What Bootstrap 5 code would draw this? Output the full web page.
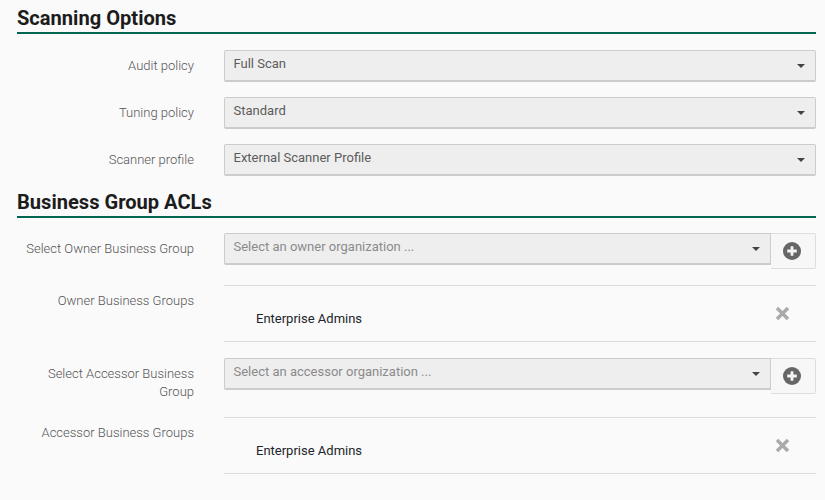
<!DOCTYPE html>
<html lang="en">
<head>
<meta charset="utf-8">
<title>Scanning Options</title>
<link href="https://cdn.jsdelivr.net/npm/bootstrap@5.3.0/dist/css/bootstrap.min.css" rel="stylesheet">
<style>
html,body{height:100%}
body{background:#fafafa;font-family:Roboto,"Liberation Sans",sans-serif;font-size:13px;color:#212529;overflow:hidden}
.page-wrap{padding:6px 9px 0 17px}
.sect-title{font-family:Roboto,"Liberation Sans",sans-serif;font-weight:700;font-size:20.1px;line-height:24px;margin:0;padding-bottom:2px;border-bottom:2px solid #00664f;color:#1c1c1c}
.sect-two{margin-top:14px}
.form-line{display:flex}
.lbl{width:177px;flex:none;text-align:right;color:#555;line-height:18px;font-weight:300}
.fld{margin-left:30px;flex:1;min-width:0}
.pick{height:32px;background:#eee;border:1px solid #ccc;border-bottom-width:2px;border-radius:2px;padding:4px 10px 4px 8.5px;line-height:18px;color:#5c5c5c;display:flex;justify-content:space-between}
.pick.ghost{color:#8b8b8b;flex:1;border-radius:2px 0 0 2px}
.caret-mark{width:0;height:0;border-left:4.5px solid transparent;border-right:4.5px solid transparent;border-top:4.5px solid #444;margin:8.5px 0 0}
.scan-line{margin-top:15px}
.scan-line:first-of-type{margin-top:16px}
.scan-line .lbl{padding-top:7px}
.add-box{width:45px;height:36px;flex:none;border:1px solid #ddd;border-left:0;border-radius:0 2px 2px 0;background:#f7f7f7;display:flex;align-items:center;justify-content:center}
.add-box svg{margin:0 2px 1px 0}
.list-line{border-top:1px solid #ddd;border-bottom:1px solid #ddd;height:57px;display:flex;align-items:center;justify-content:space-between;padding:11px 26px 0 32px;color:#212529}
.list-line svg{margin-top:-11px}
.own-row{margin-top:16px}
.own-row .lbl{padding-top:7px}
.acc-sel{margin-top:16px}
.acc-sel .lbl{padding-top:7px}
.acc-list{margin-top:16px}
.acc-list .lbl{padding-top:7px}
</style>
</head>
<body>
<div class="page-wrap">
  <h2 class="sect-title">Scanning Options</h2>
  <div class="form-line scan-line"><div class="lbl">Audit policy</div><div class="fld"><div class="pick"><span>Full Scan</span><i class="caret-mark"></i></div></div></div>
  <div class="form-line scan-line"><div class="lbl">Tuning policy</div><div class="fld"><div class="pick"><span>Standard</span><i class="caret-mark"></i></div></div></div>
  <div class="form-line scan-line"><div class="lbl">Scanner profile</div><div class="fld"><div class="pick"><span>External Scanner Profile</span><i class="caret-mark"></i></div></div></div>

  <h2 class="sect-title sect-two">Business Group ACLs</h2>

  <div class="form-line scan-line"><div class="lbl">Select Owner Business Group</div><div class="fld d-flex align-items-start"><div class="pick ghost"><span>Select an owner organization ...</span><i class="caret-mark"></i></div><div class="add-box"><svg width="18" height="18" viewBox="0 0 18 18"><circle cx="9" cy="9" r="9" fill="#666"/><path d="M9 4.2v9.6M4.2 9h9.6" stroke="#f4f4f4" stroke-width="2.8"/></svg></div></div></div>
  <div class="form-line own-row"><div class="lbl">Owner Business Groups</div><div class="fld"><div class="list-line"><span>Enterprise Admins</span><svg width="15" height="15" viewBox="0 0 15 15"><path d="M2 2l11 11M13 2L2 13" stroke="#aaa" stroke-width="3.4"/></svg></div></div></div>

  <div class="form-line acc-sel"><div class="lbl">Select Accessor Business Group</div><div class="fld d-flex align-items-start"><div class="pick ghost"><span>Select an accessor organization ...</span><i class="caret-mark"></i></div><div class="add-box"><svg width="18" height="18" viewBox="0 0 18 18"><circle cx="9" cy="9" r="9" fill="#666"/><path d="M9 4.2v9.6M4.2 9h9.6" stroke="#f4f4f4" stroke-width="2.8"/></svg></div></div></div>
  <div class="form-line acc-list"><div class="lbl">Accessor Business Groups</div><div class="fld"><div class="list-line"><span>Enterprise Admins</span><svg width="15" height="15" viewBox="0 0 15 15"><path d="M2 2l11 11M13 2L2 13" stroke="#aaa" stroke-width="3.4"/></svg></div></div></div>
</div>
<script src="https://cdn.jsdelivr.net/npm/bootstrap@5.3.0/dist/js/bootstrap.bundle.min.js"></script>
</body>
</html>
